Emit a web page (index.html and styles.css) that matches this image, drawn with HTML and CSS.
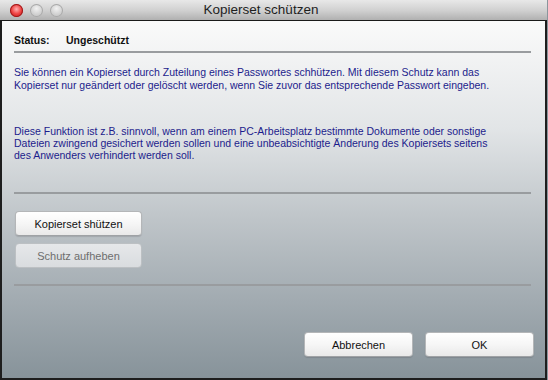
FILE: index.html
```html
<!DOCTYPE html>
<html lang="de">
<head>
<meta charset="utf-8">
<title>Kopierset schützen</title>
<link rel="stylesheet" href="styles.css">
</head>
<body>
<div class="window">
  <div class="titlebar">
    <div class="lights">
      <span class="light red"></span>
      <span class="light"></span>
      <span class="light"></span>
    </div>
    <div class="title">Kopierset schützen</div>
  </div>
  <div class="content">
    <div class="status"><span class="label">Status:</span><span class="value">Ungeschützt</span></div>
    <div class="sep sep-status"></div>
    <p class="info info-first">Sie können ein Kopierset durch Zuteilung eines Passwortes schhützen. Mit diesem Schutz kann das Kopierset nur geändert oder gelöscht werden, wenn Sie zuvor das entsprechende Passwort eingeben.</p>
    <p class="info info-second">Diese Funktion ist z.B. sinnvoll, wenn am einem PC-Arbeitsplatz bestimmte Dokumente oder sonstige Dateien zwingend gesichert werden sollen und eine unbeabsichtigte Änderung des Kopiersets seitens des Anwenders verhindert werden soll.</p>
    <div class="sep sep-info"></div>
    <div class="actions">
      <button class="btn">Kopierset shützen</button>
      <button class="btn btn-disabled" disabled>Schutz aufheben</button>
    </div>
    <div class="sep sep-actions"></div>
    <div class="footer">
      <button class="btn btn-wide">Abbrechen</button>
      <button class="btn btn-wide">OK</button>
    </div>
  </div>
</div>
</body>
</html>
```

FILE: styles.css
```css
* { box-sizing: border-box; }
html, body { margin: 0; padding: 0; }
body {
  width: 548px;
  height: 380px;
  overflow: hidden;
  background: #8a959c;
  font-family: "Liberation Sans", Arial, sans-serif;
}
.window {
  width: 547px;
  height: 380px;
  display: flex;
  flex-direction: column;
}
.titlebar {
  height: 20px;
  flex: none;
  display: flex;
  align-items: center;
  background: linear-gradient(#e8e8e8, #cfcfcf 55%, #b0b0b0);
}
.lights {
  display: flex;
  gap: 7px;
  padding-left: 10px;
  width: 70px;
  flex: none;
}
.light {
  width: 13px;
  height: 13px;
  border-radius: 50%;
  background: radial-gradient(circle at 50% 35%, #f2f2f2 0%, #d4d4d4 50%, #b8b8b8 100%);
  box-shadow: inset 0 0 0 1px #a9a9a9;
}
.light.red {
  background: radial-gradient(circle at 50% 40%, #ffb0b0 0%, #f04848 45%, #c81818 85%, #a01010 100%);
  box-shadow: inset 0 0 0 1px #9c1a1a;
}
.title {
  flex: 1;
  padding-right: 95px;
  text-align: center;
  font-size: 13.5px;
  color: #1e1e1e;
  line-height: 20px;
}
.content {
  flex: 1;
  border-top: 1px solid #1a1a1a;
  border-left: 2px solid #1e1e1e;
  border-right: 2px solid #1e1e1e;
  border-bottom: 2px solid #1e1e1e;
  background: linear-gradient(#fafafa 0%, #e2e5e7 30%, #bfc5c9 55%, #a2abb1 78%, #87939a 100%);
  padding: 13px 14px 0 12px;
  display: flex;
  flex-direction: column;
}
.status {
  font-size: 10.5px;
  line-height: 13px;
  font-weight: bold;
  color: #111;
}
.status .label {
  display: inline-block;
  width: 52px;
}
.sep {
  height: 2px;
  background: #999c9f;
  flex: none;
}
.sep-status { margin-top: 4px; }
.info {
  margin: 0;
  max-width: 484px;
  font-size: 10.5px;
  color: #1c1c8c;
}
.info-first {
  margin-top: 13px;
  line-height: 13px;
}
.info-second {
  margin-top: 33px;
  line-height: 12px;
}
.sep-info { margin-top: 31px; }
.actions {
  margin-top: 17px;
  display: flex;
  flex-direction: column;
  gap: 7px;
  padding-left: 1px;
}
.btn {
  width: 127px;
  height: 25px;
  padding: 0;
  border: 1px solid #b4b6b8;
  border-bottom-color: #9fa2a5;
  border-radius: 4px;
  background: linear-gradient(#ffffff, #f6f6f6 50%, #e9e9e9);
  font-family: "Liberation Sans", Arial, sans-serif;
  font-size: 11px;
  color: #111;
  box-shadow: 0 1px 1px rgba(0,0,0,0.12);
}
.btn-disabled {
  background: linear-gradient(#e6e8ea, #d9dcdf);
  border-color: #bcc0c3;
  color: #6e6e6e;
  box-shadow: none;
}
.sep-actions { margin-top: 16px; }
.footer {
  margin-top: 46px;
  margin-right: -3px;
  display: flex;
  justify-content: flex-end;
  gap: 12px;
}
.btn-wide { width: 109px; }
```
